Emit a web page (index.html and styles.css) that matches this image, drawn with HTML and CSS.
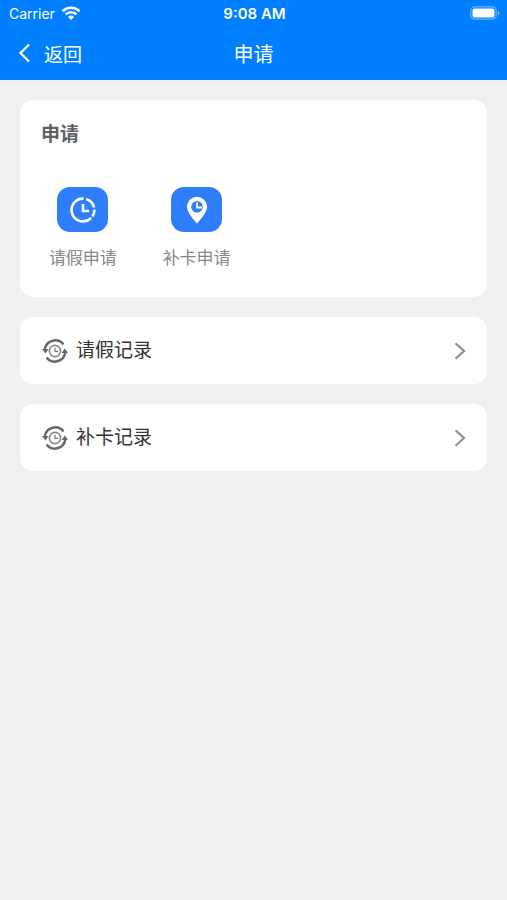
FILE: index.html
```html
<!DOCTYPE html>
<html lang="zh-CN">

<head>
<title>申请</title>
<meta charset="utf-8" />
<meta name="viewport" content="width=device-width, initial-scale=1.0">

<link rel="stylesheet" href="styles.css">
</head>

<body>
<header>
  <div class="status">
    <div class="carrier">
      <span>Carrier</span>
      <svg width="20" height="14" viewBox="0 0 20 14" fill="none" stroke="#fff" stroke-width="2.6">
        <path d="M1.5 5.2a12.2 12.2 0 0 1 17 0M4.6 8.4a7.8 7.8 0 0 1 10.8 0" />
        <path d="M10 14L7 11a4.3 4.3 0 0 1 6 0z" fill="#fff" stroke="none" />
      </svg>
    </div>
    <div class="time">9:08 AM</div>
    <div class="battery">
      <svg width="30" height="14" viewBox="0 0 30 14">
        <rect x="0.8" y="0.8" width="25.4" height="12.4" rx="4" fill="none" stroke="#fff" stroke-opacity="0.4" stroke-width="1.2" />
        <rect x="2.5" y="2.5" width="22" height="9" rx="2.2" fill="#fff" />
        <path d="M28 5v4.4a2.4 2.4 0 0 0 0-4.4z" fill="#fff" fill-opacity="0.5" />
      </svg>
    </div>
  </div>
  <nav>
    <a class="back" href="#">
      <svg width="12" height="20" viewBox="0 0 12 20" fill="none" stroke="#fff" stroke-width="2.2">
        <path d="M11 1.5L2.5 10l8.5 8.5" />
      </svg>
      <span>返回</span>
    </a>
    <h1>申请</h1>
  </nav>
</header>

<main>
  <section class="card apply">
    <h2>申请</h2>
    <div class="grid">
      <a class="app" href="#">
        <span class="tile">
          <svg width="28" height="28" viewBox="0 0 28 28" fill="none" stroke="#fff" stroke-width="2.6">
            <path d="M17.2 3A11.4 11.4 0 0 1 25 11.6M25.4 13.6A11.4 11.4 0 0 1 23.4 20.4M22.2 21.9A11.4 11.4 0 1 1 14.6 2.6" />
            <path d="M14 8v7h6" />
          </svg>
        </span>
        <span class="label">请假申请</span>
      </a>
      <a class="app" href="#">
        <span class="tile">
          <svg width="28" height="28" viewBox="0 0 28 28">
            <path d="M14 27.5C11.5 24.5 4 17 4 10.8a10 10 0 0 1 20 0C24 17 16.5 24.5 14 27.5z" fill="#fff" />
            <circle cx="14" cy="10.8" r="5.8" fill="#2e7dfa" />
            <path d="M14 6.5v5h4.8" fill="none" stroke="#fff" stroke-width="1.8" />
          </svg>
        </span>
        <span class="label">补卡申请</span>
      </a>
    </div>
  </section>

  <a class="card row" href="#">
    <svg class="record" width="26" height="26" viewBox="0 0 26 26" fill="none" stroke="#666">
      <path d="M2.8 11A10.6 10.6 0 0 1 21.5 6.4M23.2 15A10.6 10.6 0 0 1 4.5 19.6" stroke-width="2.4" />
      <path d="M0 11h6.4l-2.8 4.5zM19.6 15h6.4l-3.2-4.6z" fill="#666" stroke="none" />
      <circle cx="13" cy="13" r="5.6" stroke="#888" stroke-width="1.6" />
      <path d="M13 9.8v3.6h3.2" stroke="#777" stroke-width="1.2" />
    </svg>
    <span class="name">请假记录</span>
    <svg class="arrow" width="12" height="18" viewBox="0 0 12 18" fill="none" stroke="#869297" stroke-width="2.2">
      <path d="M1.5 1.3L10 9l-8.5 7.7" />
    </svg>
  </a>

  <a class="card row" href="#">
    <svg class="record" width="26" height="26" viewBox="0 0 26 26" fill="none" stroke="#666">
      <path d="M2.8 11A10.6 10.6 0 0 1 21.5 6.4M23.2 15A10.6 10.6 0 0 1 4.5 19.6" stroke-width="2.4" />
      <path d="M0 11h6.4l-2.8 4.5zM19.6 15h6.4l-3.2-4.6z" fill="#666" stroke="none" />
      <circle cx="13" cy="13" r="5.6" stroke="#888" stroke-width="1.6" />
      <path d="M13 9.8v3.6h3.2" stroke="#777" stroke-width="1.2" />
    </svg>
    <span class="name">补卡记录</span>
    <svg class="arrow" width="12" height="18" viewBox="0 0 12 18" fill="none" stroke="#869297" stroke-width="2.2">
      <path d="M1.5 1.3L10 9l-8.5 7.7" />
    </svg>
  </a>
</main>
</body>

</html>
```

FILE: styles.css
```css
* {
  box-sizing: border-box;
}

body {
  margin: 0;
  background-color: #f0f0f0;
  font-family: Inter, "Noto Sans CJK SC", sans-serif;
  color: #333;
}

a {
  color: inherit;
  text-decoration: none;
}

svg {
  display: block;
  flex: none;
}

header {
  background-color: #0080ff;
  color: #fff;
}

/* Equal outer columns keep the middle text centered */
.status, nav {
  display: grid;
  grid-template-columns: 1fr auto 1fr;
  align-items: center;
}

.status {
  height: 26px;
  padding: 0 7px 0 9px;
  font-size: 14px;
}

.carrier {
  display: flex;
  align-items: center;
  gap: 6px;
}

.time {
  font-size: 15px;
  font-weight: 600;
}

.battery {
  justify-self: end;
}

nav {
  height: 54px;
  padding: 0 18px;
}

.back {
  display: flex;
  align-items: center;
  gap: 14px;
  font-size: 19px;
}

h1 {
  margin: 0;
  font-size: 20px;
  font-weight: normal;
}

main {
  display: flex;
  flex-direction: column;
  gap: 20px;
  padding: 20px;
}

.card {
  background-color: #fff;
  border-radius: 13px;
}

.apply {
  padding: 21px 6px 27px;
}

h2 {
  margin: 0 15px;
  font-size: 19px;
  font-weight: bold;
  line-height: 28px;
  color: #606060;
}

.grid {
  display: grid;
  grid-template-columns: repeat(4, 1fr);
  margin-top: 38px;
}

.app {
  display: flex;
  flex-direction: column;
  align-items: center;
  gap: 14px;
}

.tile {
  display: flex;
  align-items: center;
  justify-content: center;
  width: 51px;
  height: 45px;
  border-radius: 13px;
  background-color: #2e7dfa;
}

.label {
  font-size: 17px;
  line-height: 24px;
  color: #888;
}

.row {
  display: flex;
  align-items: center;
  gap: 8px;
  padding: 20px 21px 19px 22px;
}

.name {
  flex: 1;
  font-size: 19px;
  line-height: 28px;
}
```
